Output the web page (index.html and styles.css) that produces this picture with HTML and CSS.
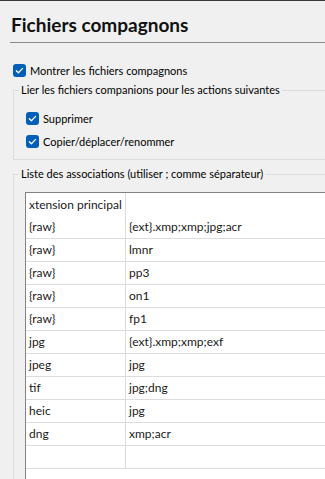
FILE: index.html
```html
<!DOCTYPE html>
<html lang="fr">
<head>
  <meta charset="UTF-8" />
  <meta name="viewport" content="width=device-width, initial-scale=1.0"/>
  <title>Fichiers compagnons</title>
  <link rel="stylesheet" href="styles.css">
</head>
<body>
  <div class="page">
    <header class="title-bar">
      <h1>Fichiers compagnons</h1>
    </header>

    <div class="content">
      <label class="option">
        <span class="check"><svg width="13" height="13" viewBox="0 0 13 13"><polyline points="3.3,6.7 5.4,8.7 9.6,4.4" /></svg></span>
        Montrer les fichiers compagnons
      </label>

      <fieldset class="group">
        <legend>Lier les fichiers companions pour les actions suivantes</legend>
        <label class="option">
          <span class="check"><svg width="13" height="13" viewBox="0 0 13 13"><polyline points="3.3,6.7 5.4,8.7 9.6,4.4" /></svg></span>
          Supprimer
        </label>
        <label class="option">
          <span class="check"><svg width="13" height="13" viewBox="0 0 13 13"><polyline points="3.3,6.7 5.4,8.7 9.6,4.4" /></svg></span>
          Copier/déplacer/renommer
        </label>
      </fieldset>

      <fieldset class="group group-list">
        <legend>Liste des associations (utiliser ; comme séparateur)</legend>
        <div class="grid">
          <table>
            <tr class="head"><td>xtension principal</td><td></td></tr>
            <tr><td>{raw}</td><td>{ext}.xmp;xmp;jpg;acr</td></tr>
            <tr><td>{raw}</td><td>lmnr</td></tr>
            <tr><td>{raw}</td><td>pp3</td></tr>
            <tr><td>{raw}</td><td>on1</td></tr>
            <tr><td>{raw}</td><td>fp1</td></tr>
            <tr><td>jpg</td><td>{ext}.xmp;xmp;exf</td></tr>
            <tr><td>jpeg</td><td>jpg</td></tr>
            <tr><td>tif</td><td>jpg;dng</td></tr>
            <tr><td>heic</td><td>jpg</td></tr>
            <tr><td>dng</td><td>xmp;acr</td></tr>
            <tr><td></td><td></td></tr>
          </table>
        </div>
      </fieldset>
    </div>
  </div>
</body>
</html>
```

FILE: styles.css
```css
html, body {
  margin: 0;
  height: 100%;
  overflow: hidden;
}

body {
  font-family: Lato, "Noto Sans", sans-serif;
  font-size: 11px;
  color: #000;
  background-color: #f0f0f0;
  border-top: 1px solid #3a3a3a;
}

.title-bar {
  margin-left: 10px;
  padding: 9px 0 0 1px;
  height: 32px;
  border-bottom: 1px solid #8a8a8a;
}

h1 {
  margin: 0;
  font-size: 19px;
  line-height: 29px;
  font-weight: 700;
  color: #111;
}

.content {
  padding-left: 13px;
}

.option {
  display: flex;
  align-items: center;
  gap: 4px;
  height: 23px;
  line-height: 16px;
}

.content > .option {
  margin-top: 16px;
}

.check {
  width: 13px;
  height: 13px;
  flex: none;
  background-color: #005fb8;
  border-radius: 3px;
}

.check svg {
  display: block;
}

.check polyline {
  fill: none;
  stroke: #fff;
  stroke-width: 1.3;
  stroke-linecap: round;
  stroke-linejoin: round;
}

.group {
  margin: 0 -20px 0 0;
  padding: 9px 0 6px 5px;
  min-width: 0;
  border: 1px solid #dcdcdc;
}

.group legend {
  padding: 0 2px;
  line-height: 16px;
}

.group .option {
  margin-left: 7px;
}

.group-list {
  margin-top: 6px;
  padding: 10px 0 0 5px;
  height: 360px;
}

.grid {
  margin-left: 6px;
  height: 100%;
  background: #fff;
  border-left: 1px solid #828282;
  border-top: 1px solid #828282;
}

table {
  width: 100%;
  table-layout: fixed;
  border-collapse: separate;
  border-spacing: 0;
}

td {
  box-sizing: border-box;
  height: 23px;
  padding: 0 3px;
  font-size: 12px;
  line-height: 22px;
  white-space: nowrap;
  overflow: hidden;
  color: #1a1a1a;
  border-bottom: 1px solid #dcdcdc;
}

td:first-child {
  width: 100px;
  border-right: 1px solid #dcdcdc;
}

.head td {
  border-bottom: none;
}
```
